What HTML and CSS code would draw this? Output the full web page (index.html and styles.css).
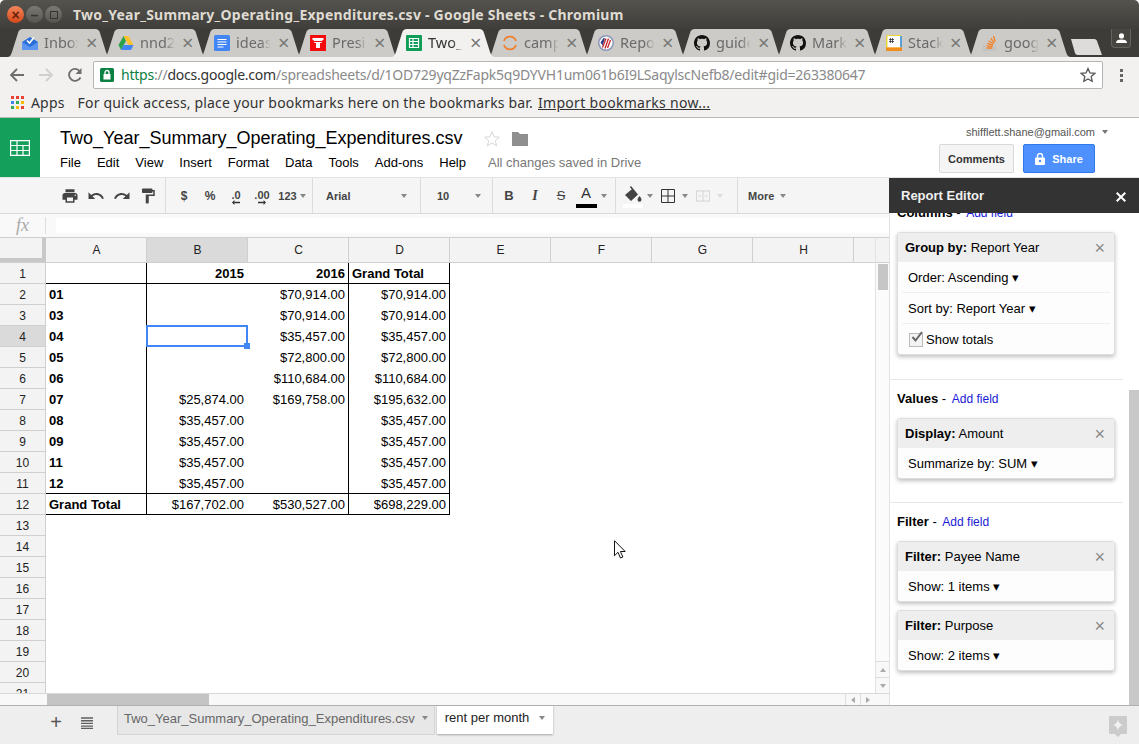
FILE: index.html
```html
<!DOCTYPE html>
<html lang="en">

<head>
  <meta charset="UTF-8">
  <title>Two_Year_Summary_Operating_Expenditures.csv - Google Sheets</title>
  <link rel="stylesheet" href="styles.css">
</head>

<body>
  <svg class="defs" width="0" height="0">
    <symbol id="tab-bg" viewBox="0 0 104 28" preserveAspectRatio="none">
      <path d="M0 28C3 28 4 26 5 23L11 4C12 1 13 0 16 0H88C91 0 92 1 93 4L99 23C100 26 101 28 104 28Z" />
    </symbol>
    <symbol id="gh" viewBox="0 0 16 16">
      <path d="M8 0C3.58 0 0 3.58 0 8c0 3.54 2.29 6.53 5.47 7.59.4.07.55-.17.55-.38 0-.19-.01-.82-.01-1.49-2.01.37-2.53-.49-2.69-.94-.09-.23-.48-.94-.82-1.13-.28-.15-.68-.52-.01-.53.63-.01 1.08.58 1.23.82.72 1.21 1.87.87 2.33.66.07-.52.28-.87.51-1.07-1.78-.2-3.64-.89-3.64-3.95 0-.87.31-1.59.82-2.15-.08-.2-.36-1.02.08-2.12 0 0 .67-.21 2.2.82.64-.18 1.32-.27 2-.27.68 0 1.36.09 2 .27 1.53-1.04 2.2-.82 2.2-.82.44 1.1.16 1.92.08 2.12.51.56.82 1.27.82 2.15 0 3.07-1.87 3.75-3.65 3.95.29.25.54.73.54 1.48 0 1.07-.01 1.93-.01 2.2 0 .21.15.46.55.38A8.013 8.013 0 0016 8c0-4.42-3.58-8-8-8z" />
    </symbol>
  </svg>

  <header class="titlebar">
    <span class="wbtn wbtn-close">×</span>
    <span class="wbtn">–</span>
    <span class="wbtn"><i class="wbtn-box"></i></span>
    <span class="window-title">Two_Year_Summary_Operating_Expenditures.csv - Google Sheets - Chromium</span>
  </header>

  <div class="tabstrip">
    <div class="tab">
      <svg class="tab-shape"><use href="#tab-bg" /></svg>
      <svg class="favicon" viewBox="0 0 16 16"><path fill="#2a6fd8" d="M0 7 8 2l8 5v8H0z" /><path fill="#5b95ef" d="M0 7l8 5 8-5v8H0z" /><path fill="none" stroke="#fff" stroke-width="1.6" d="M5 5.5 7.5 8 12 2.5" /></svg>
      <span class="tab-title">Inbox</span><span class="tab-x">×</span>
    </div>
    <div class="tab">
      <svg class="tab-shape"><use href="#tab-bg" /></svg>
      <svg class="favicon" viewBox="0 0 16 16"><path fill="#fbc02d" d="M5.5 1h5l5 9h-5z" /><path fill="#2ba24c" d="M5.5 1 .5 10 3 15l5-9z" /><path fill="#4285f4" d="M3 15h10l2.500-5H5.700z" /></svg>
      <span class="tab-title">nnd2</span><span class="tab-x">×</span>
    </div>
    <div class="tab">
      <svg class="tab-shape"><use href="#tab-bg" /></svg>
      <svg class="favicon" viewBox="0 0 16 16"><rect width="16" height="16" rx="1.500" fill="#4285f4" /><path stroke="#fff" stroke-width="1.200" d="M3.500 4.500h9M3.500 7h9M3.500 9.500h9M3.500 12h6" /></svg>
      <span class="tab-title">ideas</span><span class="tab-x">×</span>
    </div>
    <div class="tab">
      <svg class="tab-shape"><use href="#tab-bg" /></svg>
      <svg class="favicon" viewBox="0 0 16 16"><rect width="16" height="16" fill="#f40c0c" /><path fill="#fff" d="M2.500 3h11v2h-1l-1 3H10v5H6V8H4.500l-1-3h-1z" /><path fill="#f40c0c" d="M4 6h8v1H4z" /></svg>
      <span class="tab-title">Presi</span><span class="tab-x">×</span>
    </div>
    <div class="tab tab-active">
      <svg class="tab-shape"><use href="#tab-bg" /></svg>
      <svg class="favicon" viewBox="0 0 16 16"><rect width="16" height="16" rx="1" fill="#0f9d58" /><path fill="none" stroke="#fff" stroke-width="1.200" d="M3.500 3.500h9v9h-9zM3.500 6.500h9M3.500 9.500h9M7 3.500v9" /></svg>
      <span class="tab-title">Two_</span><span class="tab-x">×</span>
    </div>
    <div class="tab">
      <svg class="tab-shape"><use href="#tab-bg" /></svg>
      <svg class="favicon" viewBox="0 0 16 16"><path fill="none" stroke="#ee7f2d" stroke-width="1.800" d="M2 6a6.300 6.300 0 0 1 12 0M2 10a6.300 6.300 0 0 0 12 0" /></svg>
      <span class="tab-title">camp</span><span class="tab-x">×</span>
    </div>
    <div class="tab">
      <svg class="tab-shape"><use href="#tab-bg" /></svg>
      <svg class="favicon" viewBox="0 0 16 16"><circle cx="8" cy="8" r="8" fill="#8d97b8" /><circle cx="8" cy="8" r="6.500" fill="#fff" /><path stroke="#c8252c" stroke-width="1.300" d="M4.500 12.500l3.500-9M7 13.500l3.500-10M9.500 13l3-8" /><path fill="#2b3f86" d="M2.500 7.500l3-4.500 1.500.5-2.500 7z" /></svg>
      <span class="tab-title">Repo</span><span class="tab-x">×</span>
    </div>
    <div class="tab">
      <svg class="tab-shape"><use href="#tab-bg" /></svg>
      <svg class="favicon"><use href="#gh" /></svg>
      <span class="tab-title">guide</span><span class="tab-x">×</span>
    </div>
    <div class="tab">
      <svg class="tab-shape"><use href="#tab-bg" /></svg>
      <svg class="favicon"><use href="#gh" /></svg>
      <span class="tab-title">Mark</span><span class="tab-x">×</span>
    </div>
    <div class="tab">
      <svg class="tab-shape"><use href="#tab-bg" /></svg>
      <svg class="favicon" viewBox="0 0 16 16"><rect width="16" height="16" rx="1.500" fill="#e8d535" /><rect x="1.500" y="1" width="13" height="11.500" fill="#fff" /><rect x="14" y="1" width="2" height="11.500" fill="#5a9fd8" /><rect y="12.500" width="16" height="3.500" fill="#f28c1b" /><path stroke="#333" stroke-width=".8" d="M4.500 3v5M6.500 3v5M3 4.500h5M3 6.500h5" /></svg>
      <span class="tab-title">Stack</span><span class="tab-x">×</span>
    </div>
    <div class="tab">
      <svg class="tab-shape"><use href="#tab-bg" /></svg>
      <svg class="favicon" viewBox="0 0 16 16"><path fill="none" stroke="#bcbbbb" stroke-width="1.200" d="M2 10v5h11v-5" /><path fill="none" stroke="#f48024" stroke-width="1.300" d="M4.500 13h6M4.600 10.800l6 .6M5.200 8.400l5.800 1.700M6.500 5.800l5 3M8.700 3.200l3.700 4.600M11.500 1l1.700 5.500" /></svg>
      <span class="tab-title">goog</span><span class="tab-x">×</span>
    </div>
    <svg class="newtab" viewBox="0 0 32 16"><path fill="#dedcda" d="M1 0H24C26 0 26.500 1 27 2L32 16H8C6 16 5.500 15 5 14Z" /></svg>
    <span class="avatar-btn">
      <svg viewBox="0 0 12 12" width="11" height="11"><circle cx="6" cy="3.200" r="2.800" fill="#fff" /><path fill="#fff" d="M0 11c0-3 2-4 6-4s6 1 6 4z" /></svg>
    </span>
  </div>

  <div class="urlbar">
    <svg class="nav-icon" viewBox="0 0 16 16"><path fill="none" stroke="#6e6e6e" stroke-width="1.800" d="M15 8H2M8 2 2 8l6 6" /></svg>
    <svg class="nav-icon" viewBox="0 0 16 16"><path fill="none" stroke="#cfcfcf" stroke-width="1.800" d="M1 8h13M8 2l6 6-6 6" /></svg>
    <svg class="nav-icon" viewBox="0 0 16 16"><path fill="none" stroke="#6e6e6e" stroke-width="1.800" d="M13.500 10.500A6 6 0 1 1 13 4.500" /><path fill="#6e6e6e" d="M14.500 1v6h-6z" /></svg>
    <div class="omnibox">
      <svg class="lock" viewBox="0 0 14 14"><rect width="14" height="14" rx="1.500" fill="#0b8043" /><rect x="3.500" y="6" width="7" height="5.500" fill="#fff" /><path fill="none" stroke="#fff" stroke-width="1.300" d="M5 6V4.500a2 2 0 0 1 4 0V6" /></svg>
      <span class="url"><span class="url-https">https</span><span class="url-path">://</span><span class="url-host">docs.google.com</span><span class="url-path">/spreadsheets/d/1OD729yqZzFapk5q9DYVH1um061b6I9LSaqylscNefb8/edit#gid=263380647</span></span>
      <svg class="bookmark-star" viewBox="0 0 16 16"><path fill="none" stroke="#555" stroke-width="1.300" d="M8 1.500l2 4.400 4.800.5-3.600 3.200 1 4.700L8 11.900l-4.200 2.400 1-4.700L1.200 6.400 6 5.900z" /></svg>
    </div>
    <span class="menu-dots"><i></i><i></i><i></i></span>
  </div>

  <div class="bookmarks">
    <svg class="apps" viewBox="0 0 13 13">
      <rect width="3" height="3" fill="#ea4335" /><rect x="5" width="3" height="3" fill="#ea4335" /><rect x="10" width="3" height="3" fill="#ea4335" />
      <rect y="5" width="3" height="3" fill="#4285f4" /><rect x="5" y="5" width="3" height="3" fill="#34a853" /><rect x="10" y="5" width="3" height="3" fill="#fbbc05" />
      <rect y="10" width="3" height="3" fill="#34a853" /><rect x="5" y="10" width="3" height="3" fill="#fbbc05" /><rect x="10" y="10" width="3" height="3" fill="#ea4335" />
    </svg>
    <span class="apps-label">Apps</span>
    <span class="bookmarks-hint">For quick access, place your bookmarks here on the bookmarks bar.</span>
    <a class="bookmarks-link">Import bookmarks now...</a>
  </div>

  <div class="doc-header">
    <div class="sheets-logo">
      <svg viewBox="0 0 20 16" width="20" height="16"><path fill="none" stroke="#fff" stroke-width="1.200" d="M.6.600h18.800v14.800H.6zM.6 5.500h18.800M.6 10.500h18.800M7 .6v14.800M13 5.500v9.900" /></svg>
    </div>
    <div class="doc-main">
      <div class="doc-title-row">
        <span class="doc-title">Two_Year_Summary_Operating_Expenditures.csv</span>
        <svg class="doc-star" viewBox="0 0 16 16"><path fill="none" stroke="#d6d6d6" stroke-width="1" d="M8 .8l2.100 5 5.200.4-4 3.400 1.300 5.200L8 11.900l-4.600 2.900 1.300-5.200-4-3.400 5.200-.4z" /></svg>
        <svg class="doc-folder" viewBox="0 0 16 14"><path fill="#8f8f8f" d="M0 0h6l2 2h8v12H0z" /></svg>
      </div>
      <nav class="menus">
        <a>File</a><a>Edit</a><a>View</a><a>Insert</a><a>Format</a><a>Data</a><a>Tools</a><a>Add-ons</a><a>Help</a>
        <span class="saved">All changes saved in Drive</span>
      </nav>
    </div>
    <div class="doc-user">
      <div class="user-email">shifflett.shane@gmail.com<i class="caret"></i></div>
      <div class="doc-buttons">
        <button class="btn-comments">Comments</button>
        <button class="btn-share">
          <svg viewBox="0 0 10 12" width="10" height="12"><rect y="4.500" width="10" height="7.500" rx="1" fill="#fff" /><path fill="none" stroke="#fff" stroke-width="1.400" d="M2.500 5V3a2.500 2.500 0 0 1 5 0v2" /><circle cx="5" cy="8" r="1.200" fill="#4d90fe" /></svg>
          Share
        </button>
      </div>
    </div>
  </div>

  <div class="workspace">
    <div class="editor">
      <div class="toolbar">
        <div class="tb-group tb-first">
          <span class="tb"><svg viewBox="0 0 24 24"><path d="M19 8H5c-1.660 0-3 1.340-3 3v6h4v4h12v-4h4v-6c0-1.660-1.340-3-3-3zm-3 11H8v-5h8v5zm3-7c-.550 0-1-.450-1-1s.450-1 1-1 1 .450 1 1-.450 1-1 1zm-1-9H6v4h12V3z" /></svg></span>
          <span class="tb"><svg viewBox="0 0 24 24"><path d="M12.500 8c-2.650 0-5.050.990-6.900 2.600L2 7v9h9l-3.620-3.620c1.390-1.160 3.160-1.880 5.120-1.880 3.540 0 6.550 2.310 7.600 5.500l2.370-.780C21.080 11.030 17.150 8 12.500 8z" /></svg></span>
          <span class="tb"><svg viewBox="0 0 24 24"><path d="M18.400 10.600C16.550 8.990 14.150 8 11.500 8c-4.650 0-8.580 3.030-9.960 7.220L3.900 16c1.050-3.190 4.050-5.500 7.600-5.500 1.950 0 3.730.720 5.120 1.880L13 16h9V7l-3.600 3.600z" /></svg></span>
          <span class="tb"><svg viewBox="0 0 24 24"><path d="M18 4V3c0-.550-.450-1-1-1H5c-.550 0-1 .450-1 1v4c0 .550.450 1 1 1h12c.550 0 1-.450 1-1V6h1v4H9v11c0 .550.450 1 1 1h2c.550 0 1-.450 1-1v-9h8V4h-3z" /></svg></span>
        </div>
        <div class="tb-group tb-numbers">
          <span class="tb tb-text">$</span>
          <span class="tb tb-text">%</span>
          <span class="tb tb-text tb-decimal">.0<svg viewBox="0 0 10 6"><path d="M0 3l3-3v2h7v2H3v2z" /></svg></span>
          <span class="tb tb-text tb-decimal">.00<svg viewBox="0 0 10 6"><path d="M10 3L7 0v2H0v2h7v2z" /></svg></span>
          <span class="tb tb-text tb-123">123<i class="caret"></i></span>
        </div>
        <div class="tb-group tb-font">Arial<i class="caret"></i></div>
        <div class="tb-group tb-size">10<i class="caret"></i></div>
        <div class="tb-group tb-style">
          <span class="tb tb-text tb-bold">B</span>
          <span class="tb tb-text tb-italic">I</span>
          <span class="tb tb-text tb-strike">S</span>
          <span class="tb tb-color">A<i class="color-bar"></i></span><i class="caret"></i>
        </div>
        <div class="tb-group tb-cell">
          <span class="tb tb-fill"><svg viewBox="0 0 18 16"><path d="M7 0 5.800 1.200l2 2L1 9l6 6 7-6.500zM15.500 10s-2 2.400-2 3.700a2 2 0 0 0 4 0c0-1.300-2-3.700-2-3.700z" /></svg><i class="fill-bar"></i></span><i class="caret"></i>
          <span class="tb"><svg class="borders" viewBox="0 0 14 14"><path fill="none" stroke="#333" d="M.5.500h13v13H.5zM7 .5v13M.5 7h13" /></svg></span><i class="caret"></i>
          <span class="tb"><svg class="borders" viewBox="0 0 18 14"><path fill="none" stroke="#ccc" d="M.5.500h17v13H.5zM9 .5v13M3 7h4M11 7h4" /></svg></span><i class="caret caret-light"></i>
        </div>
        <div class="tb-group tb-more">More<i class="caret"></i></div>
      </div>

      <div class="formula-bar">
        <span class="fx">fx</span>
        <div class="formula-input"></div>
      </div>

      <div class="sheet">
        <div class="grid-wrap">
          <div class="col-heads">
            <div class="corner"></div>
            <div class="col-head">A</div>
            <div class="col-head col-selected">B</div>
            <div class="col-head">C</div>
            <div class="col-head">D</div>
            <div class="col-head">E</div>
            <div class="col-head">F</div>
            <div class="col-head">G</div>
            <div class="col-head">H</div>
            <div class="col-head col-rest"></div>
          </div>
          <div class="grid-body">
            <div class="row-heads">
              <div class="row-head">1</div>
              <div class="row-head">2</div>
              <div class="row-head">3</div>
              <div class="row-head row-selected">4</div>
              <div class="row-head">5</div>
              <div class="row-head">6</div>
              <div class="row-head">7</div>
              <div class="row-head">8</div>
              <div class="row-head">9</div>
              <div class="row-head">10</div>
              <div class="row-head">11</div>
              <div class="row-head">12</div>
              <div class="row-head">13</div>
              <div class="row-head">14</div>
              <div class="row-head">15</div>
              <div class="row-head">16</div>
              <div class="row-head">17</div>
              <div class="row-head">18</div>
              <div class="row-head">19</div>
              <div class="row-head">20</div>
              <div class="row-head">21</div>
            </div>
            <table class="report">
              <tr class="line-below bold">
                <td class="ca"></td><td class="cb">2015</td><td class="cc">2016</td><td class="cd left">Grand Total</td>
              </tr>
              <tr><td class="ca bold">01</td><td class="cb"></td><td class="cc">$70,914.00</td><td class="cd">$70,914.00</td></tr>
              <tr><td class="ca bold">03</td><td class="cb"></td><td class="cc">$70,914.00</td><td class="cd">$70,914.00</td></tr>
              <tr><td class="ca bold">04</td><td class="cb active-cell"><i class="selection"></i></td><td class="cc">$35,457.00</td><td class="cd">$35,457.00</td></tr>
              <tr><td class="ca bold">05</td><td class="cb"></td><td class="cc">$72,800.00</td><td class="cd">$72,800.00</td></tr>
              <tr><td class="ca bold">06</td><td class="cb"></td><td class="cc">$110,684.00</td><td class="cd">$110,684.00</td></tr>
              <tr><td class="ca bold">07</td><td class="cb">$25,874.00</td><td class="cc">$169,758.00</td><td class="cd">$195,632.00</td></tr>
              <tr><td class="ca bold">08</td><td class="cb">$35,457.00</td><td class="cc"></td><td class="cd">$35,457.00</td></tr>
              <tr><td class="ca bold">09</td><td class="cb">$35,457.00</td><td class="cc"></td><td class="cd">$35,457.00</td></tr>
              <tr><td class="ca bold">11</td><td class="cb">$35,457.00</td><td class="cc"></td><td class="cd">$35,457.00</td></tr>
              <tr class="line-below"><td class="ca bold">12</td><td class="cb">$35,457.00</td><td class="cc"></td><td class="cd">$35,457.00</td></tr>
              <tr class="line-below"><td class="ca bold">Grand Total</td><td class="cb">$167,702.00</td><td class="cc">$530,527.00</td><td class="cd">$698,229.00</td></tr>
            </table>
          </div>
        </div>
        <div class="vscroll">
          <div class="vscroll-head"></div>
          <div class="vscroll-track"><div class="vscroll-thumb"></div></div>
          <div class="scroll-btn"><i class="arrow-up"></i></div>
          <div class="scroll-btn"><i class="arrow-down"></i></div>
        </div>
      </div>

      <div class="hscroll">
        <div class="hscroll-corner"></div>
        <div class="hscroll-thumb"></div>
        <div class="hscroll-btns"><span class="hbtn"><i class="arrow-left"></i></span><span class="hbtn"><i class="arrow-right"></i></span></div>
      </div>
    </div>

    <aside class="report-editor">
      <div class="re-header">
        <span>Report Editor</span>
        <svg viewBox="0 0 10 10" width="10" height="10"><path stroke="#fff" stroke-width="2" d="M.7.700l8.600 8.600M9.300.7.700 9.300" /></svg>
      </div>
      <div class="re-body">
        <div class="re-content">
          <section class="re-section re-columns">
            <div class="re-label"><b>Columns</b> - <a>Add field</a></div>
            <div class="card">
              <div class="card-head"><span><b>Group by:</b> Report Year</span><span class="card-x">×</span></div>
              <div class="card-row">Order: Ascending ▾</div>
              <div class="card-row">Sort by: Report Year ▾</div>
              <div class="card-row card-check"><i class="checkbox"><svg viewBox="0 0 14 13"><path fill="none" stroke="#666" stroke-width="2" d="M2.500 6l3 3.500L12 1" /></svg></i>Show totals</div>
            </div>
          </section>
          <section class="re-section re-values">
            <div class="re-label"><b>Values</b> - <a>Add field</a></div>
            <div class="card">
              <div class="card-head"><span><b>Display:</b> Amount</span><span class="card-x">×</span></div>
              <div class="card-row">Summarize by: SUM ▾</div>
            </div>
          </section>
          <section class="re-section re-last">
            <div class="re-label"><b>Filter</b> - <a>Add field</a></div>
            <div class="card">
              <div class="card-head"><span><b>Filter:</b> Payee Name</span><span class="card-x">×</span></div>
              <div class="card-row">Show: 1 items ▾</div>
            </div>
            <div class="card">
              <div class="card-head"><span><b>Filter:</b> Purpose</span><span class="card-x">×</span></div>
              <div class="card-row">Show: 2 items ▾</div>
            </div>
          </section>
        </div>
        <div class="re-scroll"><div class="re-thumb"></div></div>
      </div>
    </aside>
  </div>

  <footer class="sheetbar">
    <span class="sb-icon sb-plus">+</span>
    <svg class="sb-list" viewBox="0 0 12 12"><path stroke="#5f5f5f" stroke-width="1.400" d="M0 1h12M0 3.700h12M0 6.400h12M0 9.100h12M0 11.500h12" /></svg>
    <div class="sheet-tab">Two_Year_Summary_Operating_Expenditures.csv<i class="caret"></i></div>
    <div class="sheet-tab sheet-tab-active">rent per month<i class="caret"></i></div>
    <svg class="explore" viewBox="0 0 18 21"><path fill="#cbcbcb" d="M1 0h16a1 1 0 0 1 1 1v16a1 1 0 0 1-1 1h-5l-3 3-3-3H1a1 1 0 0 1-1-1V1a1 1 0 0 1 1-1z" /><path fill="#f1f1f1" d="M9 3.500c.5 3 2 4.500 5 5.500-3 1-4.500 2.500-5 5.500-.5-3-2-4.500-5-5.500 3-1 4.500-2.500 5-5.500z" /></svg>
  </footer>

  <svg class="cursor" viewBox="0 0 12 19" width="12" height="19"><path fill="#fff" stroke="#111" d="M.5.700v15l3.500-3.400 2.500 5.700 2.400-1-2.500-5.500h4.800z" /></svg>
</body>

</html>
```

FILE: styles.css
```css
* {
  box-sizing: border-box;
}

html,
body {
  margin: 0;
  padding: 0;
  height: 744px;
  overflow: hidden;
}

body {
  position: relative;
  display: flex;
  flex-direction: column;
  font-family: "Liberation Sans", Arial, sans-serif;
  font-size: 13px;
  color: #000;
  background-color: #fff;
}

.defs {
  position: absolute;
}

i {
  font-style: normal;
}

/* browser chrome */
.titlebar {
  height: 29px;
  flex: none;
  display: flex;
  align-items: center;
  padding-left: 7px;
  background: linear-gradient(#55534e, #3f3e3a);
  border-radius: 5px 5px 0 0;
}

.wbtn {
  width: 17px;
  height: 17px;
  margin-right: 2px;
  border-radius: 50%;
  display: flex;
  align-items: center;
  justify-content: center;
  background: linear-gradient(#7b7a75, #565550);
  color: #35342f;
  font-size: 14px;
  font-weight: bold;
  line-height: 1;
}

.wbtn-close {
  background: linear-gradient(#f3865d, #d6481a);
  color: #6b2208;
}

.wbtn-box {
  width: 8px;
  height: 8px;
  border: 1px solid #35342f;
}

.window-title {
  margin-left: 9px;
  font-family: "Noto Sans", sans-serif;
  font-size: 14px;
  font-weight: 700;
  letter-spacing: 0.23px;
  color: #dfdbd2;
  white-space: nowrap;
}

.tabstrip {
  height: 28px;
  flex: none;
  position: relative;
  display: flex;
  padding-left: 7px;
  background-color: #3d3c38;
}

.tab {
  position: relative;
  width: 104px;
  height: 28px;
  flex: none;
  margin-right: -8px;
  fill: #cdcbc8;
  font-family: "Noto Sans", sans-serif;
  font-size: 14.500px;
  color: #6a6a6a;
}

.tab-active {
  fill: #f2f1f0;
  color: #333;
  z-index: 1;
}

.tab-shape {
  position: absolute;
  left: 0;
  top: 0;
  width: 104px;
  height: 28px;
}

.favicon {
  position: absolute;
  left: 15px;
  top: 6px;
  width: 16px;
  height: 16px;
  fill: #111;
}

.tab-title {
  position: absolute;
  left: 37px;
  top: 3px;
  width: 35px;
  overflow: hidden;
  white-space: nowrap;
  -webkit-mask-image: linear-gradient(to right, #000 70%, transparent);
  mask-image: linear-gradient(to right, #000 70%, transparent);
}

.tab-x {
  position: absolute;
  left: 79px;
  top: 0;
  font-size: 20px;
  color: #777;
}

.newtab {
  width: 32px;
  height: 16px;
  flex: none;
  margin: 10px 0 0 7px;
}

.avatar-btn {
  width: 20px;
  height: 19px;
  margin-left: 9px;
  display: flex;
  justify-content: center;
  align-items: center;
  background-color: #46453f;
  border: 1px solid #65645f;
  border-top: none;
  border-radius: 0 0 4px 4px;
}

.urlbar {
  height: 32px;
  flex: none;
  display: flex;
  align-items: center;
  padding: 4px 0 0 9px;
  background-color: #f2f1f0;
}

.nav-icon {
  width: 16px;
  height: 16px;
  margin-right: 13px;
}

.omnibox {
  width: 1010px;
  height: 28px;
  margin-left: -3px;
  display: flex;
  align-items: center;
  padding: 0 6px;
  background-color: #fff;
  border: 1px solid #b6b6b4;
  border-radius: 2px;
}

.lock {
  width: 14px;
  height: 14px;
  flex: none;
}

.url {
  flex: 1;
  margin-left: 7px;
  margin-top: -2px;
  font-family: "Noto Sans", sans-serif;
  font-size: 14px;
  letter-spacing: -0.23px;
  white-space: nowrap;
  overflow: hidden;
}

.url-https {
  color: #0b8043;
}

.url-host {
  color: #333;
}

.url-path {
  color: #8a8a8a;
}

.bookmark-star {
  width: 16px;
  height: 16px;
  flex: none;
}

.menu-dots {
  display: flex;
  flex-direction: column;
  gap: 2px;
  margin-left: 17px;
}

.menu-dots i {
  width: 3px;
  height: 3px;
  background-color: #666;
}

.bookmarks {
  height: 29px;
  flex: none;
  display: flex;
  align-items: center;
  padding: 0 0 2px 11px;
  font-family: "Noto Sans", sans-serif;
  font-size: 14px;
  letter-spacing: 0.17px;
  color: #333;
  background-color: #f2f1f0;
  border-bottom: 1px solid #b9b9b7;
}

.apps {
  width: 13px;
  height: 13px;
}

.apps-label {
  margin-left: 7px;
}

.bookmarks-hint {
  margin-left: 13px;
}

.bookmarks-link {
  margin-left: 5px;
  letter-spacing: 0.3px;
  text-decoration: underline;
}

/* docs header */
.doc-header {
  height: 60px;
  flex: none;
  display: flex;
  border-bottom: 1px solid #e2e2e2;
}

.sheets-logo {
  width: 40px;
  flex: none;
  display: flex;
  align-items: center;
  justify-content: center;
  background-color: #14a05a;
}

.doc-main {
  flex: 1;
  padding: 9px 0 0 20px;
}

.doc-title-row {
  display: flex;
  align-items: center;
  height: 23px;
}

.doc-title {
  font-size: 18px;
}

.doc-star {
  width: 16px;
  height: 16px;
  margin-left: 21px;
}

.doc-folder {
  width: 16px;
  height: 14px;
  margin-left: 12px;
}

.menus {
  display: flex;
  gap: 16px;
  margin-top: 5px;
  font-size: 13px;
  line-height: 16px;
}

.saved {
  margin-left: 6px;
  color: #777;
}

.doc-user {
  width: 200px;
  flex: none;
  padding: 7px 0 0 27px;
}

.user-email {
  display: flex;
  align-items: center;
  height: 13px;
  font-size: 11px;
  color: #555;
  white-space: nowrap;
}

.user-email .caret {
  margin-left: 7px;
  border-top-color: #777;
}

.doc-buttons {
  display: flex;
  gap: 9px;
  margin-top: 6px;
  margin-left: -27px;
}

.doc-buttons button {
  height: 29px;
  padding: 0;
  font-family: "Liberation Sans", Arial, sans-serif;
  font-size: 11px;
  font-weight: bold;
  border-radius: 2px;
}

.btn-comments {
  width: 75px;
  color: #333;
  background-color: #f5f5f5;
  border: 1px solid #d8d8d8;
}

.btn-share {
  width: 72px;
  display: flex;
  align-items: center;
  justify-content: center;
  gap: 7px;
  color: #fff;
  background-color: #4d90fe;
  border: 1px solid #3079ed;
}

.caret {
  display: inline-block;
  width: 0;
  height: 0;
  border: 3.500px solid transparent;
  border-top: 4px solid #888;
  border-bottom: none;
}

.caret-light {
  border-top-color: #ddd;
}

/* toolbar */
.workspace {
  height: 527px;
  flex: none;
  display: flex;
}

.editor {
  width: 889px;
  flex: none;
  display: flex;
  flex-direction: column;
}

.toolbar {
  height: 36px;
  flex: none;
  display: flex;
  background-color: #f5f5f5;
  border-bottom: 1px solid #d9d9d9;
}

.tb-group {
  display: flex;
  align-items: center;
  border-right: 1px solid #dcdcdc;
  font-size: 11px;
  font-weight: bold;
  color: #444;
}

.tb {
  width: 26px;
  height: 24px;
  flex: none;
  display: flex;
  align-items: center;
  justify-content: center;
  position: relative;
}

.tb svg {
  width: 18px;
  height: 18px;
  fill: #444;
}

.tb-first {
  width: 166px;
  padding-left: 57px;
}

.tb-text {
  font-size: 12px;
  color: #444;
}

.tb-numbers {
  width: 147px;
  padding-left: 5px;
}

.tb-decimal {
  font-size: 11px;
  padding-bottom: 2px;
}

.tb-decimal svg {
  position: absolute;
  left: 9px;
  bottom: 3px;
  width: 8px;
  height: 5px;
  fill: #333;
}

.tb-123 {
  width: 34px;
  gap: 3px;
  font-size: 11px;
}

.tb-font {
  width: 108px;
  padding-left: 13px;
  justify-content: space-between;
  padding-right: 13px;
}

.tb-size {
  width: 72px;
  padding-left: 16px;
  padding-right: 11px;
  justify-content: space-between;
}

.tb-style {
  width: 123px;
  padding-left: 3px;
}

.tb-bold {
  font-size: 13px;
}

.tb-italic {
  font-family: "Liberation Serif", serif;
  font-style: italic;
  font-size: 14px;
}

.tb-strike {
  font-weight: normal;
  font-size: 13px;
  text-decoration: line-through;
}

.tb-color {
  font-size: 15px;
  font-weight: normal;
  padding-bottom: 6px;
  color: #333;
  width: 24px;
}

.color-bar {
  position: absolute;
  left: 2px;
  bottom: 0;
  width: 21px;
  height: 4px;
  background-color: #000;
}

.tb-style > .caret {
  margin-left: 3px;
}

.tb-cell {
  width: 122px;
  padding-left: 4px;
}

.tb-cell .caret {
  margin: 0 2px 0 1px;
}

.tb-fill {
  padding-bottom: 4px;
}

.tb svg.borders {
  width: 14px;
  height: 14px;
}

.fill-bar {
  position: absolute;
  left: 3px;
  bottom: 0;
  width: 20px;
  height: 4px;
  background-color: #fff;
}

.tb-more {
  padding-left: 10px;
  gap: 6px;
  border-right: none;
}

/* formula bar */
.formula-bar {
  height: 24px;
  flex: none;
  display: flex;
  align-items: center;
  background-color: #f9f9f9;
  border-bottom: 1px solid #cfcfcf;
}

.fx {
  width: 46px;
  flex: none;
  padding-left: 16px;
  font-family: "Liberation Serif", serif;
  font-style: italic;
  font-size: 18px;
  color: #aaa;
  border-right: 1px solid #ddd;
  line-height: 17px;
}

.formula-input {
  flex: 1;
  height: 15px;
  margin-left: 10px;
  background-color: #fff;
}

/* sheet */
.sheet {
  flex: 1;
  min-height: 0;
  display: flex;
  overflow: hidden;
}

.grid-wrap {
  width: 875px;
  flex: none;
}

.col-heads {
  height: 25px;
  display: flex;
  background-color: #f3f3f3;
  border-bottom: 1px solid #cfcfcf;
}

.corner {
  width: 46px;
  flex: none;
  border-right: 4px solid #c8c8c8;
  border-bottom: 4px solid #c8c8c8;
  background-color: #f3f3f3;
}

.col-head {
  width: 101px;
  flex: none;
  display: flex;
  align-items: center;
  justify-content: center;
  padding-left: 1px;
  font-size: 12px;
  color: #222;
  border-right: 1px solid #cfcfcf;
}

.col-selected {
  background-color: #dadada;
}

.col-rest {
  width: 22px;
}

.grid-body {
  display: flex;
}

.row-heads {
  width: 46px;
  flex: none;
}

.row-head {
  height: 21px;
  display: flex;
  align-items: center;
  justify-content: center;
  padding-top: 1px;
  font-size: 12px;
  color: #222;
  background-color: #f3f3f3;
  border-right: 1px solid #cfcfcf;
  border-bottom: 1px solid #cfcfcf;
}

.row-selected {
  background-color: #dadada;
}

.report {
  border-collapse: separate;
  border-spacing: 0;
  table-layout: fixed;
  width: 404px;
  height: 252px;
  align-self: flex-start;
}

.report td {
  width: 101px;
  height: 21px;
  padding: 0 3px;
  text-align: right;
  white-space: nowrap;
  font-size: 13px;
  line-height: 20px;
}

.report .ca {
  text-align: left;
  padding-left: 3px;
  border-right: 1px solid #000;
}

.report .cb {
  padding-right: 4px;
}

.report .cc,
.report .cd {
  border-right: 1px solid #000;
}

.report .left {
  text-align: left;
}

.bold {
  font-weight: bold;
}

.report .line-below td {
  padding-top: 1px;
  line-height: 19px;
  border-bottom: 1px solid #000;
}

.active-cell {
  position: relative;
}

.selection {
  position: absolute;
  left: -1px;
  top: -1px;
  width: 102px;
  height: 22px;
  border: 2px solid #4285f4;
}

.selection::after {
  content: "";
  position: absolute;
  right: -4px;
  bottom: -4px;
  width: 6px;
  height: 6px;
  background-color: #4285f4;
}

.vscroll {
  width: 14px;
  flex: none;
  display: flex;
  flex-direction: column;
  border-left: 1px solid #e2e2e2;
}

.vscroll-head {
  height: 25px;
  flex: none;
  background-color: #f3f3f3;
  border-bottom: 1px solid #cfcfcf;
}

.vscroll-track {
  flex: 1;
  padding: 1px 1px 0 2px;
  background-color: #fbfbfb;
}

.vscroll-thumb {
  height: 26px;
  background-color: #c6c6c6;
}

.scroll-btn {
  height: 16px;
  flex: none;
  display: flex;
  align-items: center;
  justify-content: center;
  background-color: #f8f8f8;
  border-top: 1px solid #ddd;
}

.arrow-up,
.arrow-down,
.arrow-left,
.arrow-right {
  width: 0;
  height: 0;
  border: 3px solid transparent;
}

.arrow-up {
  border-top: none;
  border-bottom: 4px solid #aaa;
}

.arrow-down {
  border-bottom: none;
  border-top: 4px solid #aaa;
}

.arrow-left {
  border-left: none;
  border-right: 4px solid #aaa;
}

.arrow-right {
  border-right: none;
  border-left: 4px solid #aaa;
}

.hscroll {
  height: 12px;
  flex: none;
  display: flex;
  background-color: #f8f8f8;
  border-top: 1px solid #d8d8d8;
}

.hscroll-corner {
  width: 47px;
  flex: none;
}

.hscroll-thumb {
  width: 162px;
  flex: none;
  background-color: #c4c4c4;
}

.hscroll-btns {
  display: flex;
  margin-left: 636px;
}

.hbtn {
  width: 15px;
  display: flex;
  align-items: center;
  justify-content: center;
  border-left: 1px solid #ddd;
}

/* report editor */
.report-editor {
  width: 250px;
  flex: none;
  display: flex;
  flex-direction: column;
  border-left: 1px solid #e2e2e2;
}

.re-header {
  height: 35px;
  flex: none;
  display: flex;
  align-items: center;
  justify-content: space-between;
  padding: 0 13px 0 12px;
  margin-left: -1px;
  font-size: 13px;
  font-weight: bold;
  color: #f0f0f0;
  background-color: #333;
  position: relative;
  z-index: 1;
}

.re-header svg {
  margin-top: 3px;
}

.re-body {
  flex: 1;
  min-height: 0;
  display: flex;
  overflow: hidden;
}

.re-content {
  flex: 1;
  min-width: 0;
  padding-right: 6px;
}

.re-section {
  padding: 11px 0 0 7px;
  border-bottom: 1px solid #e8e8e8;
}

.re-columns {
  margin-top: -19px;
  height: 186px;
}

.re-values {
  height: 123px;
}

.re-last {
  border-bottom: none;
}

.re-label {
  height: 16px;
  line-height: 15px;
  margin-bottom: 11px;
  font-size: 13px;
}

.re-label a {
  margin-left: 2px;
  font-size: 12px;
  color: #1a1ad6;
}

.card {
  width: 218px;
  margin-bottom: 8px;
  background-color: #fdfdfd;
  border-radius: 3px;
  border: 1px solid #dedede;
  box-shadow: 0 2px 4px rgba(0, 0, 0, 0.25);
}

.card-head {
  height: 29px;
  display: flex;
  align-items: center;
  justify-content: space-between;
  padding: 0 9px 0 7px;
  background-color: #eee;
  font-size: 13px;
}

.card-x {
  font-size: 18px;
  line-height: 1;
  color: #888;
}

.card-row {
  height: 31px;
  display: flex;
  align-items: center;
  margin: 0 4px;
  padding-left: 6px;
  font-size: 13px;
  border-bottom: 1px solid #efefef;
}

.card-row:last-child {
  height: 30px;
  border-bottom: none;
}

.card-check {
  gap: 3px;
  padding: 1px 0 0 7px;
}

.checkbox {
  width: 14px;
  height: 14px;
  background-color: #f3f3f3;
  border: 1px solid #bbb;
  position: relative;
}

.checkbox svg {
  position: absolute;
  left: 0;
  top: -3px;
  width: 14px;
  height: 13px;
}

.re-scroll {
  width: 10px;
  flex: none;
  padding-top: 177px;
}

.re-thumb {
  height: 100%;
  background-color: #c8c8c8;
}

/* sheet bar */
.sheetbar {
  flex: 1;
  position: relative;
  display: flex;
  padding-left: 50px;
  background-color: #eee;
  border-top: 1px solid #b0b0b0;
}

.sb-icon {
  width: 12px;
  height: 36px;
  font-size: 20px;
  color: #555;
  text-align: center;
  line-height: 33px;
}

.sb-list {
  width: 12px;
  height: 12px;
  margin: 11px 0 0 19px;
}

.sheet-tab {
  height: 29px;
  display: flex;
  align-items: center;
  gap: 7px;
  margin-left: 24px;
  padding: 0 6px 4px 6px;
  font-size: 13px;
  color: #666;
  background-color: #e7e7e7;
  border: 1px solid #d4d4d4;
  border-top: none;
}

.sheet-tab-active {
  height: 28px;
  margin-left: 2px;
  color: #222;
  background-color: #fff;
  box-shadow: 0 1px 2px rgba(0, 0, 0, 0.3);
  border: none;
  gap: 10px;
  padding: 0 8px 5px 8px;
}

.explore {
  position: absolute;
  left: 1109px;
  top: 10px;
  width: 18px;
  height: 21px;
}

.cursor {
  position: absolute;
  left: 614px;
  top: 540px;
}
```
